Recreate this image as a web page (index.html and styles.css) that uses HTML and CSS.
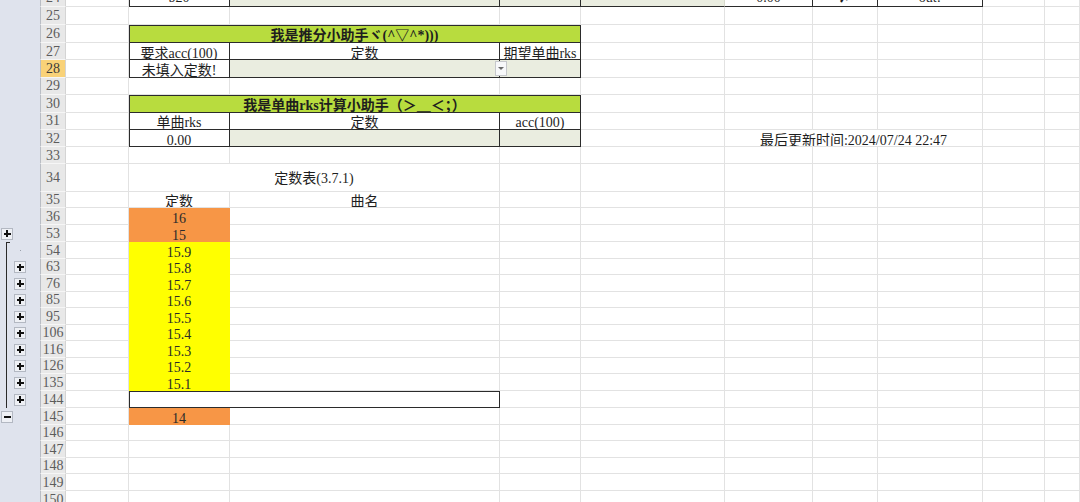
FILE: index.html
```html
<!DOCTYPE html>
<html lang="zh">
<head>
    <meta charset="UTF-8">
    <meta name="viewport" content="width=device-width, initial-scale=1.0">
    <title>定数表</title>
    <link rel="stylesheet" href="styles.css">
</head>
<body>

<div class="sheet" id="sheet"></div>

<script>
    const letters = "ABCDEFGHIJ";

    // [row number, height in px]
    const rows = [
        [24, 7], [25, 18], [26, 18], [27, 17], [28, 17.5], [29, 17.5], [30, 17.5], [31, 17.5],
        [32, 17], [33, 17], [34, 28], [35, 16], [36, 17], [53, 17], [54, 17], [63, 16],
        [76, 17], [85, 16], [95, 17], [106, 16], [116, 17], [126, 16], [135, 17], [144, 17],
        [145, 17], [146, 16], [147, 17], [148, 16], [149, 17], [150, 17]
    ];

    const rowClass = { 24: "cut", 34: "tall" };
    const selectedRow = 28;

    const cells = {
        B24: { t: "b20", cls: "box bl" },
        C24: { cls: "box fill" },
        D24: { cls: "box fill" },
        E24: { cls: "box fill soft" },
        F24: { t: "0.00", cls: "box" },
        G24: { t: "✗", cls: "box mark" },
        H24: { t: "out!", cls: "box" },

        B26: { t: "我是推分小助手ヾ(^▽^*)))", span: 3, cls: "box bt bl head" },
        B27: { t: "要求acc(100)", cls: "box bl" },
        C27: { t: "定数", cls: "box" },
        D27: { t: "期望单曲rks", cls: "box" },
        B28: { t: "未填入定数!", cls: "box bl" },
        C28: { cls: "box fill has-drop", drop: true },
        D28: { cls: "box fill" },

        B30: { t: "我是单曲rks计算小助手（＞＿＜；）", span: 3, cls: "box bt bl head" },
        B31: { t: "单曲rks", cls: "box bl" },
        C31: { t: "定数", cls: "box" },
        D31: { t: "acc(100)", cls: "box" },
        B32: { t: "0.00", cls: "box bl" },
        C32: { cls: "box fill" },
        D32: { cls: "box fill" },
        F32: { t: "最后更新时间:2024/07/24 22:47", span: 3 },

        B34: { t: "定数表(3.7.1)", span: 2 },
        B35: { t: "定数" },
        C35: { t: "曲名" },
        B36: { t: "16", cls: "orange" },
        B53: { t: "15", cls: "orange" },
        B144: { span: 2, cls: "box bt bl" },
        B145: { t: "14", cls: "orange" }
    };

    [54, 63, 76, 85, 95, 106, 116, 126, 135].forEach((n, i) => {
        cells["B" + n] = { t: "15." + (9 - i), cls: "yellow" };
    });

    // outline gutter: buttons and bracket line
    const outline = {
        53: { btn: "plus l1" },
        54: { line: "ln first" },
        145: { btn: "minus l1" }
    };
    [63, 76, 85, 95, 106, 116, 126, 135, 144].forEach(n => {
        outline[n] = { line: "ln", btn: "plus l2" };
    });

    const sheet = document.getElementById("sheet");
    sheet.style.gridTemplateRows = rows.map(r => r[1] + "px").join(" ");

    function add(parent, cls, text) {
        const d = document.createElement("div");
        d.className = cls;
        if (text) d.textContent = text;
        parent.appendChild(d);
        return d;
    }

    rows.forEach(([n]) => {
        const rc = rowClass[n] ? " " + rowClass[n] : "";
        const o = outline[n] || {};

        const g = add(sheet, "gut " + (o.line || ""));
        if (o.btn) add(g, "ob " + o.btn);

        add(sheet, "rh" + rc + (n === selectedRow ? " sel" : ""), String(n));

        for (let k = 0; k < letters.length; k++) {
            const def = cells[letters[k] + n] || {};
            const span = def.span || 1;
            const c = add(sheet, "c " + (def.cls || "") + rc, def.t);
            if (span > 1) c.style.gridColumn = "span " + span;
            if (def.drop) add(c, "drop");
            k += span - 1;
        }
    });
</script>

</body>
</html>
```

FILE: styles.css
```css
body {
    margin: 0;
    overflow: hidden;
    background: #fff;
    font-family: "Liberation Serif", "Noto Sans CJK SC", serif;
    font-size: 14px;
    color: #1e1e1e;
}

.sheet {
    display: grid;
    grid-template-columns: 40px 26px 63px 101px 270px 81px 144px 88px 65px 105px 62px 1fr;
    width: 1080px;
}

/* outline gutter */
.gut {
    background: #dfe3ed;
    display: flex;
    align-items: center;
}

.gut.ln {
    background: linear-gradient(#2a2a2a, #2a2a2a) 6px 0 / 1px 100% no-repeat, #dfe3ed;
}

.gut.ln.first {
    background:
        linear-gradient(#2a2a2a, #2a2a2a) 6px 0 / 4px 1px no-repeat,
        linear-gradient(#9aa0aa, #9aa0aa) 20px 8px / 1px 1px no-repeat,
        linear-gradient(#2a2a2a, #2a2a2a) 6px 0 / 1px 100% no-repeat,
        #dfe3ed;
}

.ob {
    box-sizing: border-box;
    width: 12px;
    height: 12px;
    border: 1px solid #b3b8c2;
    background: #eef0f5;
    display: grid;
    place-items: center;
}

.ob.l1 {
    margin-left: 1px;
}

.ob.l2 {
    margin-left: 14px;
}

.ob::before,
.ob::after {
    content: "";
    grid-area: 1 / 1;
    background: #111;
}

.ob::before {
    width: 7px;
    height: 2px;
}

.ob.plus::after {
    width: 2px;
    height: 7px;
}

/* row headers */
.rh {
    box-sizing: border-box;
    background: #e8e8e8;
    border-left: 1px solid #b9bdc4;
    border-right: 1px solid #d4d4d4;
    border-bottom: 1px solid #f6f6f6;
    color: #5c5c5c;
    display: flex;
    align-items: center;
    justify-content: center;
    line-height: 17px;
    overflow: hidden;
}

.rh.cut {
    align-items: flex-end;
}

.rh.sel {
    background: #f9d278;
    color: #3b3b3b;
}

/* cells */
.c {
    box-sizing: border-box;
    border-right: 1px solid #e2e2e2;
    border-bottom: 1px solid #e2e2e2;
    display: flex;
    align-items: center;
    justify-content: center;
    white-space: nowrap;
    overflow: hidden;
    line-height: 14px;
    padding-top: 5px;
}

.c.cut {
    align-items: flex-end;
    line-height: 17px;
    padding-top: 0;
}

.c.tall {
    align-items: flex-end;
    padding-bottom: 5px;
}

.box {
    border-right-color: #2b2b2b;
    border-bottom-color: #2b2b2b;
}

.box.soft {
    border-right-color: #d8dacd;
}

.bt {
    box-shadow: inset 0 1px #2b2b2b;
}

.bl {
    box-shadow: inset 1px 0 #2b2b2b;
}

.bt.bl {
    box-shadow: inset 1px 1px #2b2b2b;
}

.fill {
    background: #eaede0;
}

.head {
    background: #b8dc3e;
    font-weight: bold;
}

.mark {
    font-weight: bold;
}

.orange {
    background: #f79646;
    border-color: transparent;
    color: #2a2a2a;
}

.yellow {
    background: #ffff00;
    border-color: transparent;
    color: #2a2a2a;
}

.has-drop {
    position: relative;
    overflow: visible;
}

.drop {
    position: absolute;
    right: -8px;
    top: 1px;
    box-sizing: border-box;
    width: 12px;
    height: 15px;
    border: 1px solid #c6c8cc;
    background: #f7f8fa;
    display: grid;
    place-items: center;
}

.drop::after {
    content: "";
    border-left: 3px solid transparent;
    border-right: 3px solid transparent;
    border-top: 3px solid #6a6a6a;
}
```
